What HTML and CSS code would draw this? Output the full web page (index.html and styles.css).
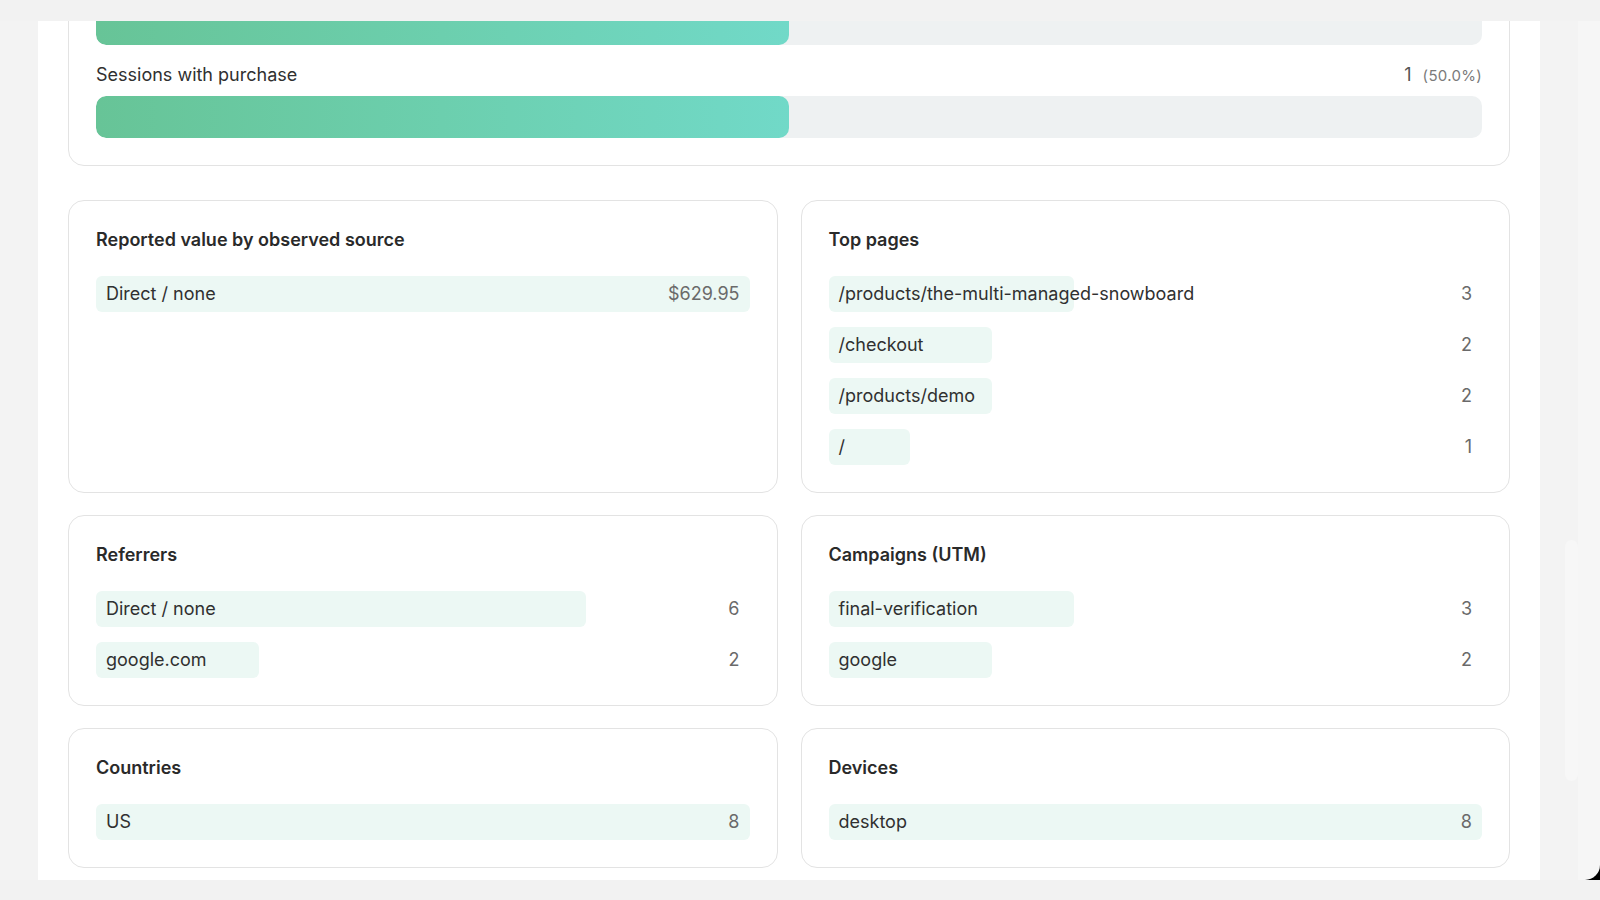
FILE: index.html
```html
<!DOCTYPE html>
<html lang="en">

<head>
  <meta charset="UTF-8">
  <meta name="viewport" content="width=device-width, initial-scale=1.0">
  <title>Attribution report</title>
  <link rel="stylesheet" href="styles.css">
</head>

<body>
  <div class="frame">
    <div class="top-bar"></div>
    <div class="middle">
      <div class="gutter"></div>
      <main class="app">
        <div class="scroller">
          <section class="card funnel">
            <div class="step">
              <div class="track"><div class="track-fill" style="width: 50%"></div></div>
            </div>
            <div class="step">
              <div class="step-head">
                <span class="step-label">Sessions with purchase</span>
                <span class="step-value">1 <small>(50.0%)</small></span>
              </div>
              <div class="track"><div class="track-fill" style="width: 50%"></div></div>
            </div>
          </section>

          <div class="grid">
            <section class="card">
              <h2>Reported value by observed source</h2>
              <ul class="rows">
                <li class="row"><span class="row-fill" style="width: 100%"></span><span class="row-label">Direct / none</span><span class="row-value">$629.95</span></li>
              </ul>
            </section>
            <section class="card">
              <h2>Top pages</h2>
              <ul class="rows">
                <li class="row"><span class="row-fill" style="width: 37.5%"></span><span class="row-label">/products/the-multi-managed-snowboard</span><span class="row-value">3</span></li>
                <li class="row"><span class="row-fill" style="width: 25%"></span><span class="row-label">/checkout</span><span class="row-value">2</span></li>
                <li class="row"><span class="row-fill" style="width: 25%"></span><span class="row-label">/products/demo</span><span class="row-value">2</span></li>
                <li class="row"><span class="row-fill" style="width: 12.5%"></span><span class="row-label">/</span><span class="row-value">1</span></li>
              </ul>
            </section>
            <section class="card">
              <h2>Referrers</h2>
              <ul class="rows">
                <li class="row"><span class="row-fill" style="width: 75%"></span><span class="row-label">Direct / none</span><span class="row-value">6</span></li>
                <li class="row"><span class="row-fill" style="width: 25%"></span><span class="row-label">google.com</span><span class="row-value">2</span></li>
              </ul>
            </section>
            <section class="card">
              <h2>Campaigns (UTM)</h2>
              <ul class="rows">
                <li class="row"><span class="row-fill" style="width: 37.5%"></span><span class="row-label">final-verification</span><span class="row-value">3</span></li>
                <li class="row"><span class="row-fill" style="width: 25%"></span><span class="row-label">google</span><span class="row-value">2</span></li>
              </ul>
            </section>
            <section class="card">
              <h2>Countries</h2>
              <ul class="rows">
                <li class="row"><span class="row-fill" style="width: 100%"></span><span class="row-label">US</span><span class="row-value">8</span></li>
              </ul>
            </section>
            <section class="card">
              <h2>Devices</h2>
              <ul class="rows">
                <li class="row"><span class="row-fill" style="width: 100%"></span><span class="row-label">desktop</span><span class="row-value">8</span></li>
              </ul>
            </section>
          </div>
        </div>
      </main>
      <div class="side">
        <div class="side-track"><div class="thumb"></div></div>
        <div class="side-edge"><div class="side-edge-inner"></div></div>
      </div>
    </div>
    <div class="bottom-bar"></div>
  </div>
</body>

</html>
```

FILE: styles.css
```css
* {
  box-sizing: border-box;
}

body {
  margin: 0;
  background: #f2f2f2;
  font-family: Inter, "Noto Sans", sans-serif;
  color: #303030;
  overflow: hidden;
}

.frame {
  width: 1600px;
  height: 900px;
  display: flex;
  flex-direction: column;
}

.top-bar {
  height: 21px;
  background: #f2f2f2;
}

.bottom-bar {
  height: 20px;
  background: #f2f2f2;
}

.middle {
  flex: 1;
  display: flex;
  min-height: 0;
}

.gutter {
  width: 38px;
  background: #f3f3f3;
}

.app {
  width: 1502px;
  background: #fff;
  overflow: hidden;
}

/* page is scrolled down a bit, the funnel card is cut at the top */
.scroller {
  margin-top: -46px;
  padding: 0 30px;
}

.side {
  width: 60px;
  display: flex;
}

.side-track {
  width: 38px;
  background: #f3f3f3;
  padding: 519px 0 0 25px;
}

.thumb {
  width: 13px;
  height: 241px;
  border-radius: 7px;
  background: #f7f7f7;
}

.side-edge {
  width: 22px;
  background: #000;
}

.side-edge-inner {
  height: 100%;
  background: #f6f6f6;
  border-bottom-right-radius: 15px;
}

.card {
  border: 1px solid #e3e3e3;
  border-radius: 16px;
  padding: 27px;
  background: #fff;
}

.card h2 {
  margin: 0 0 24px;
  font-size: 18px;
  line-height: 24px;
  font-weight: 600;
  color: #2a2a2a;
}

/* funnel */
.step + .step {
  margin-top: 18px;
}

.step-head {
  display: flex;
  justify-content: space-between;
  align-items: baseline;
  height: 24px;
  margin-bottom: 9px;
  font-size: 18px;
  line-height: 24px;
}

.step-value {
  color: #555;
}

.step-value small {
  font-size: 15px;
  color: #7a7a7a;
  margin-left: 6px;
  letter-spacing: 0.3px;
}

.track {
  height: 42px;
  border-radius: 10px;
  background: #eef1f2;
  overflow: hidden;
}

.track-fill {
  height: 100%;
  border-radius: 10px;
  background: linear-gradient(90deg, #67c497 0%, #6ccfae 50%, #71d9c8 100%);
}

/* breakdown cards */
.grid {
  margin-top: 34px;
  display: grid;
  grid-template-columns: 1fr 1fr;
  gap: 22px 23px;
}

.rows {
  list-style: none;
  margin: 0;
  padding: 0;
}

.row {
  position: relative;
  display: flex;
  justify-content: space-between;
  height: 36px;
  padding: 0 10px;
  font-size: 18px;
  line-height: 36px;
}

.row + .row {
  margin-top: 15px;
}

.row-fill {
  position: absolute;
  left: 0;
  top: 0;
  bottom: 0;
  border-radius: 6px;
  background: #ecf8f4;
}

.row-label,
.row-value {
  position: relative;
}

.row-value {
  color: #6a6a6a;
}
```
